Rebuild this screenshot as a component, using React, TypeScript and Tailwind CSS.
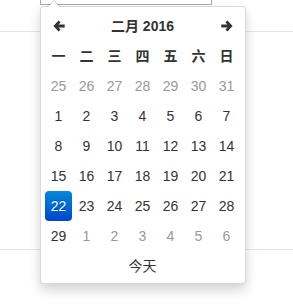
import React from "react";

const font = { fontFamily: '"Liberation Sans", "Noto Sans CJK SC", sans-serif' };

function Arrow({ dir }: { dir: "left" | "right" }) {
  return (
    <svg width="12" height="12" viewBox="0 0 12 12" className={dir === "right" ? "rotate-180" : ""}>
      <path d="M5.6 0.5 L0.4 6 L5.6 11.5 L7.6 9.5 L5.4 7.5 H11.7 V4.5 H5.4 L7.6 2.5 Z" fill="#333" />
    </svg>
  );
}

export default function App() {
  const weeks: { d: number; muted?: boolean; active?: boolean }[][] = [
    [25, 26, 27, 28, 29, 30, 31].map((d) => ({ d, muted: true })),
    [1, 2, 3, 4, 5, 6, 7].map((d) => ({ d })),
    [8, 9, 10, 11, 12, 13, 14].map((d) => ({ d })),
    [15, 16, 17, 18, 19, 20, 21].map((d) => ({ d })),
    [22, 23, 24, 25, 26, 27, 28].map((d) => ({ d, active: d === 22 })),
    [{ d: 29 }, ...[1, 2, 3, 4, 5, 6].map((d) => ({ d, muted: true }))],
  ];
  const names = ["一", "二", "三", "四", "五", "六", "日"];
  return (
    <div className="relative w-[293px] h-[308px] bg-white overflow-hidden text-[14px] text-[#333]" style={font}>
      <div className="ml-[40px] w-[172px] h-[5px] border-x border-b border-[#aaa]" />
      <div className="mt-[26px] border-t border-[#e3e3e3]" />
      <div className="mt-[217px] border-t border-[#e3e3e3]" />

      <div className="absolute left-[40px] top-[6px] w-[206px] bg-white border border-[rgba(0,0,0,0.15)] rounded-[4px] shadow-[0_6px_12px_rgba(0,0,0,0.175)] px-[4px] pt-[4px] pb-[2px]">
        <div className="absolute left-[6px] top-[-7px] w-0 h-0 border-l-[7px] border-r-[7px] border-b-[7px] border-l-transparent border-r-transparent border-b-[rgba(0,0,0,0.2)]" />
        <div className="absolute left-[7px] top-[-6px] w-0 h-0 border-l-[6px] border-r-[6px] border-b-[6px] border-l-transparent border-r-transparent border-b-white" />

        <div className="grid grid-cols-[repeat(7,27px)] gap-x-[1px]">
          <div className="h-[30px] flex items-center justify-center"><Arrow dir="left" /></div>
          <div className="col-span-5 h-[30px] flex items-center justify-center font-bold">二月 2016</div>
          <div className="h-[30px] flex items-center justify-center"><Arrow dir="right" /></div>

          {names.map((n) => (
            <div key={n} className="h-[30px] flex items-center justify-center font-bold">{n}</div>
          ))}

          {weeks.flat().map((c, i) => (
            <div
              key={i}
              className={
                c.active
                  ? "h-[30px] flex items-center justify-center rounded-[4px] text-white bg-gradient-to-b from-[#0a88d8] to-[#0444cc] [text-shadow:0_-1px_0_rgba(0,0,0,0.25)]"
                  : c.muted
                  ? "h-[30px] flex items-center justify-center text-[#999]"
                  : "h-[30px] flex items-center justify-center"
              }
            >
              {c.d}
            </div>
          ))}

          <div className="col-span-7 h-[30px] flex items-center justify-center">今天</div>
        </div>
      </div>
    </div>
  );
}
